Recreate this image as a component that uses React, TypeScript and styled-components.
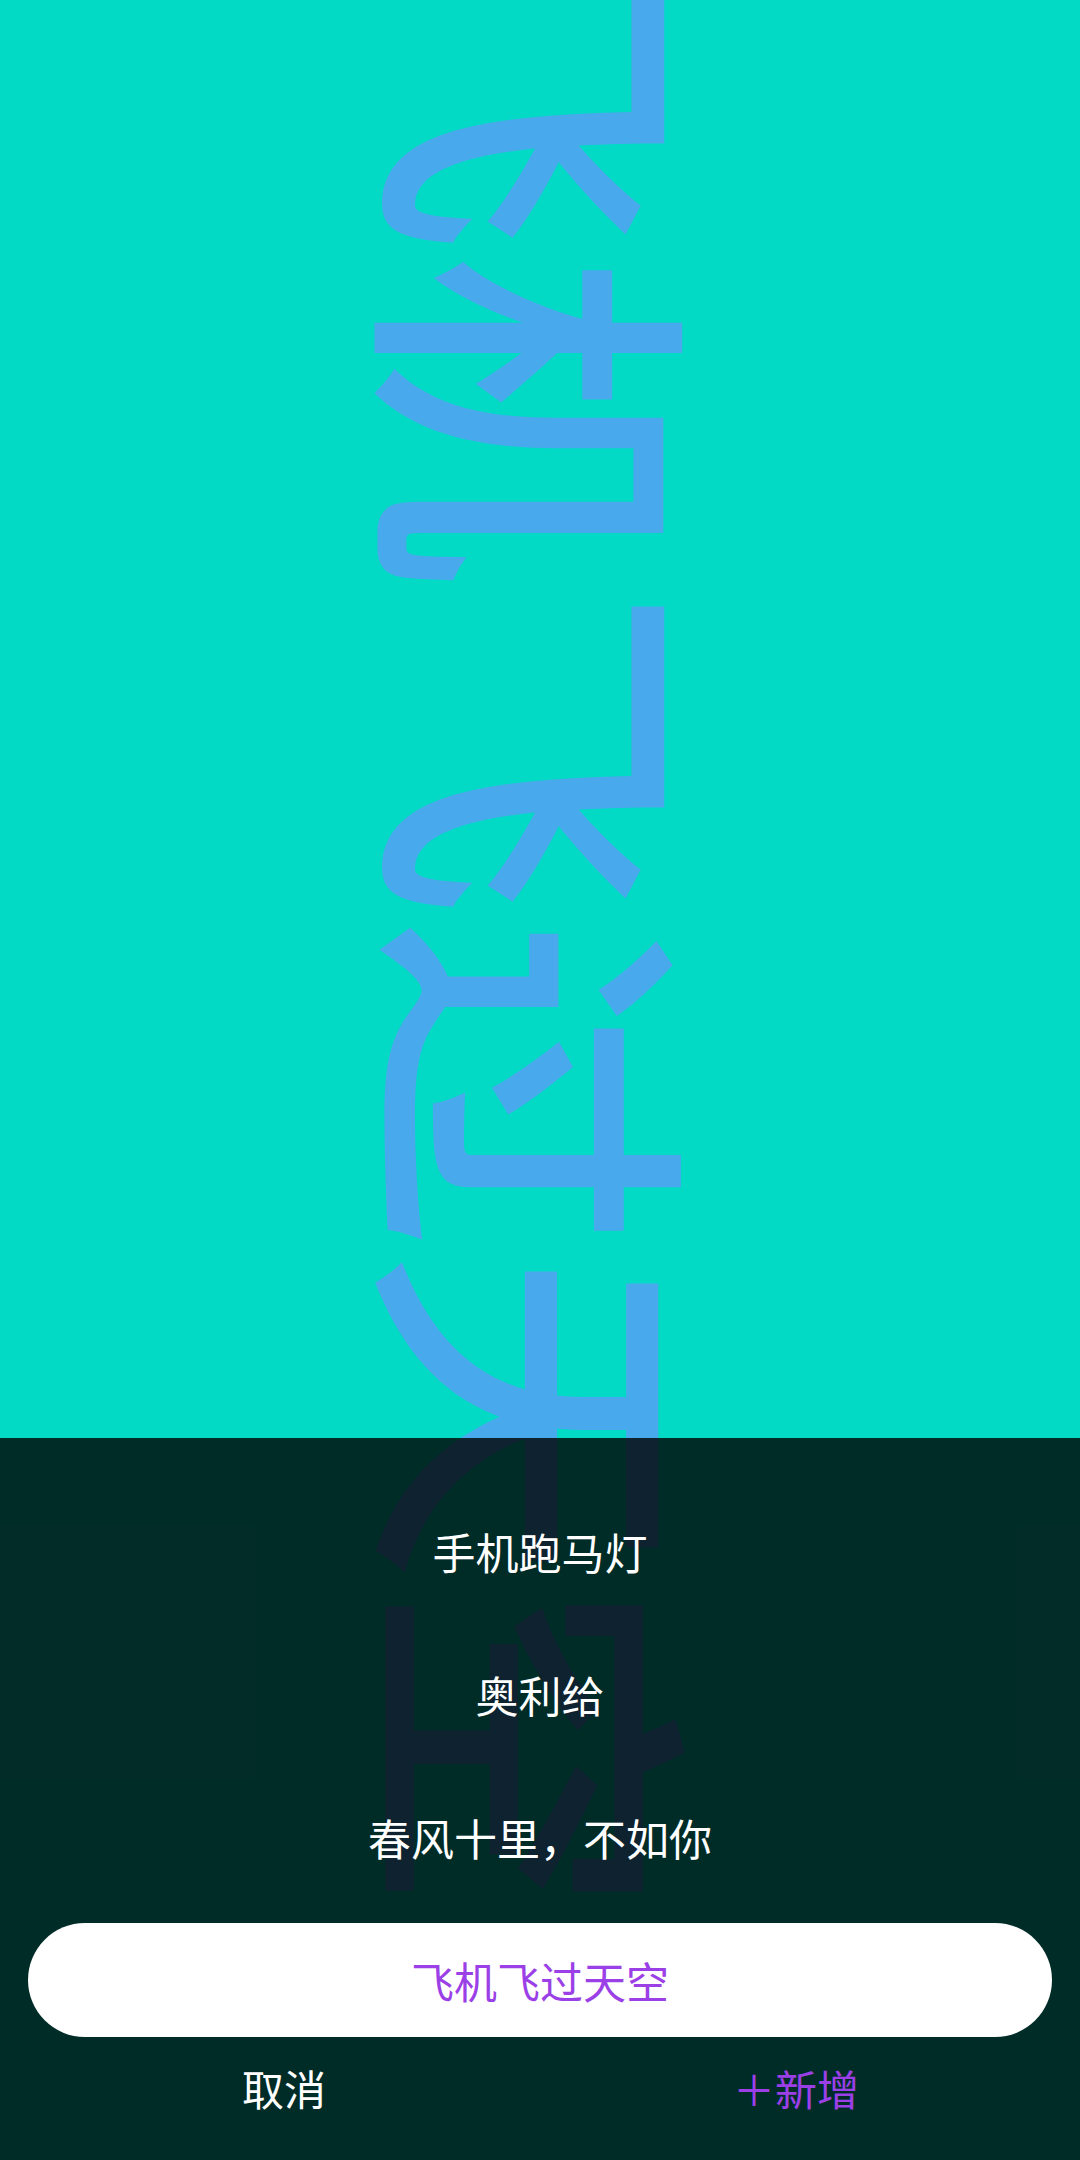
import React, { useState } from "react";
import styled, { createGlobalStyle } from "styled-components";

const GlobalStyle = createGlobalStyle`
  html, body {
    margin: 0;
    padding: 0;
    background: #03dac6;
  }
  * {
    box-sizing: border-box;
  }
`;

const FONT = `"Noto Sans CJK SC", "Noto Sans", sans-serif`;

const options = ["手机跑马灯", "奥利给", "春风十里，不如你", "飞机飞过天空"];

const App: React.FC = () => {
  const [selected, setSelected] = useState<number>(3);

  return (
    <>
      <GlobalStyle />
      <Page>
        <Marquee>{options[selected]}</Marquee>
        <Sheet>
          <OptionList>
            {options.map((item, idx) => (
              <OptionItem
                key={item}
                $active={idx === selected}
                onClick={() => setSelected(idx)}
              >
                {item}
              </OptionItem>
            ))}
          </OptionList>
          <ActionRow>
            <ActionButton>取消</ActionButton>
            <ActionButton $accent>＋新增</ActionButton>
          </ActionRow>
        </Sheet>
      </Page>
    </>
  );
};

const Page = styled.div`
  position: relative;
  display: flex;
  flex-direction: column;
  width: 100%;
  height: 2160px;
  overflow: hidden;
  background: #03dac6;
  font-family: ${FONT};
`;

// running text of the marquee, partly scrolled out of view
const Marquee = styled.div`
  position: absolute;
  top: -78px;
  left: 380px;
  writing-mode: vertical-rl;
  text-orientation: sideways;
  white-space: nowrap;
  font-family: ${FONT};
  font-size: 332px;
  font-weight: 500;
  line-height: 1;
  color: #48a9ec;
`;

const Sheet = styled.div`
  position: relative;
  z-index: 1;
  margin-top: auto;
  height: 722px;
  padding: 56px 28px 0;
  display: flex;
  flex-direction: column;
  background: rgba(0, 0, 0, 0.8);
`;

const OptionList = styled.div`
  display: flex;
  flex-direction: column;
  gap: 29px;
`;

const OptionItem = styled.div<{ $active?: boolean }>`
  height: 114px;
  display: flex;
  align-items: center;
  justify-content: center;
  border-radius: 57px;
  font-size: 43px;
  color: ${p => (p.$active ? "#9b40e6" : "#ffffff")};
  background: ${p => (p.$active ? "#ffffff" : "transparent")};
  cursor: pointer;
`;

const ActionRow = styled.div`
  display: flex;
  height: 100px;
`;

const ActionButton = styled.div<{ $accent?: boolean }>`
  flex: 1;
  display: flex;
  align-items: center;
  justify-content: center;
  font-size: 42px;
  color: ${p => (p.$accent ? "#9b40e6" : "#ffffff")};
  cursor: pointer;
`;

export default App;
